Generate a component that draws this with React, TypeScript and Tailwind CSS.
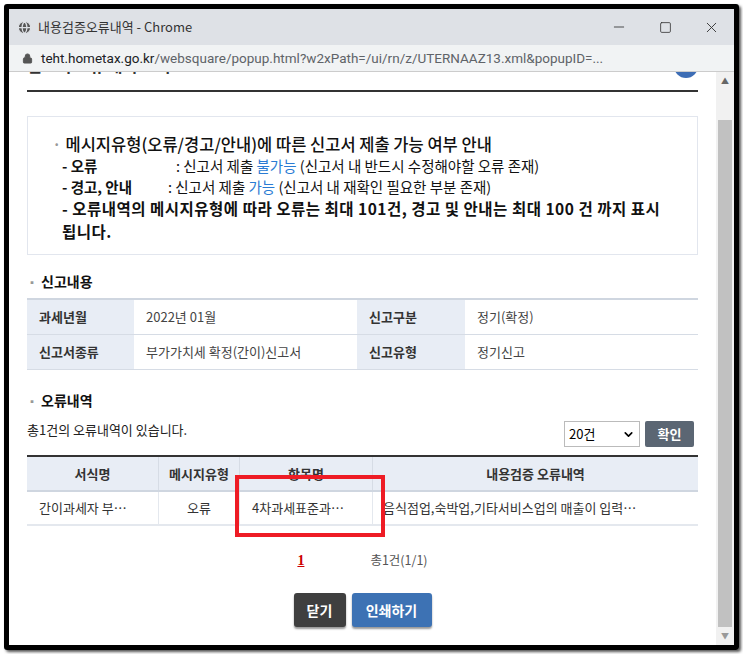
import { Minus, Square, X, Lock, Globe, ChevronDown } from 'lucide-react';

const font = { fontFamily: '"Noto Sans CJK KR", "Noto Sans", sans-serif' };

export default function App() {
  return (
    <div className="w-[743px] h-[654px] bg-white p-[4px]" style={font}>
      <div className="w-[735px] h-[646px] border-[5px] border-black rounded-[3px] flex flex-col overflow-hidden shadow-[2px_2px_3px_#555]">
        {/* title bar */}
        <div className="h-[36px] bg-[#dee1e6] flex items-center pl-[8px] shrink-0">
          <Globe className="w-[15px] h-[15px] text-[#555]" fill="#555" stroke="#dee1e6" />
          <span className="ml-[6px] text-[13px] text-[#333]">내용검증오류내역 - Chrome</span>
          <div className="ml-auto flex items-center">
            <div className="w-[46px] flex justify-center"><Minus className="w-[16px] h-[16px] text-[#333]" strokeWidth={1.3} /></div>
            <div className="w-[46px] flex justify-center"><Square className="w-[13px] h-[13px] text-[#333]" strokeWidth={1.5} /></div>
            <div className="w-[46px] flex justify-center"><X className="w-[17px] h-[17px] text-[#333]" strokeWidth={1.3} /></div>
          </div>
        </div>
        {/* address bar */}
        <div className="h-[27px] bg-[#f1f3f4] border-b border-[#ccc] flex items-center pl-[13px] shrink-0 relative z-10">
          <Lock className="w-[11px] h-[11px] text-[#555]" fill="#555" />
          <span className="ml-[8px] text-[13.5px] text-[#202124] whitespace-nowrap" style={{ fontFamily: 'Roboto, sans-serif' }}>
            teht.hometax.go.kr<span className="text-[#5f6368]">/websquare/popup.html?w2xPath=/ui/rn/z/UTERNAAZ13.xml&amp;popupID=...</span>
          </span>
        </div>
        {/* content */}
        <div className="flex-1 flex overflow-hidden">
          <div className="flex-1 relative overflow-hidden px-[18px]">
            <div className="h-[24px] relative border-b-2 border-[#333] mt-[-4px]">
              <span className="absolute left-0 top-[-13px] text-[16px] leading-[20px] text-[#333] font-bold">신고서 오류 내역 조회</span>
              <div className="absolute right-0 top-[-14px] w-[24px] h-[24px] rounded-full bg-[#3d6db5]" />
            </div>
            <div className="mt-[24px] border border-[#e2e6ee] h-[139px] pl-[24px] pt-[16px] pr-[34px] text-[#111]">
              <div className="text-[16.5px] leading-[22px] font-medium"><span className="text-[#999] mr-[4px]">·</span>메시지유형(오류/경고/안내)에 따른 신고서 제출 가능 여부 안내</div>
              <div className="pl-[10px] text-[14.5px] leading-[21px]">
                <div><span className="font-bold inline-block w-[114px]">- 오류</span><span>: 신고서 제출 <span className="text-[#2a7bd3]">불가능</span> (신고서 내 반드시 수정해야할 오류 존재)</span></div>
                <div><span className="font-bold inline-block w-[106px]">- 경고, 안내</span><span>: 신고서 제출 <span className="text-[#2a7bd3]">가능</span> (신고서 내 재확인 필요한 부분 존재)</span></div>
                <div className="font-bold text-[15.5px] leading-[23px] tracking-[0.5px]">- 오류내역의 메시지유형에 따라 오류는 최대 101건, 경고 및 안내는 최대 100 건 까지 표시됩니다.</div>
              </div>
            </div>
            <div className="mt-[16px] text-[14px] font-bold text-[#111]"><span className="text-[#999] text-[10px] mr-[4px]">▪</span>신고내용</div>
            <div className="mt-[6px] border-t-2 border-[#cfd6e0] text-[13px]">
              {[['과세년월', '2022년 01월', '신고구분', '정기(확정)'], ['신고서종류', '부가가치세 확정(간이)신고서', '신고유형', '정기신고']].map((r) => (
                <div key={r[0]} className="grid grid-cols-[107px_223px_108px_1fr] h-[35px] border-b border-[#d6dce5]">
                  <div className="bg-[#e8edf5] flex items-center pl-[12px] font-bold text-[#333]">{r[0]}</div>
                  <div className="flex items-center pl-[12px] text-[#444]">{r[1]}</div>
                  <div className="bg-[#e8edf5] flex items-center pl-[12px] font-bold text-[#333]">{r[2]}</div>
                  <div className="flex items-center pl-[12px] text-[#444]">{r[3]}</div>
                </div>
              ))}
            </div>
            <div className="mt-[20px] text-[14px] font-bold text-[#111]"><span className="text-[#999] text-[10px] mr-[4px]">▪</span>오류내역</div>
            <div className="mt-[10px] flex items-end justify-between h-[26px]">
              <span className="text-[13px] text-[#222] mb-[8px]">총1건의 오류내역이 있습니다.</span>
              <div className="flex gap-[5px] items-center mr-[4px]">
                <div className="w-[76px] h-[26px] border border-[#bbb] flex items-center justify-between px-[4px] text-[13px]">20건<ChevronDown className="w-[13px] h-[13px]" strokeWidth={3} /></div>
                <div className="w-[49px] h-[26px] bg-[#5b6673] text-white text-[13px] font-bold flex items-center justify-center rounded-[2px]">확인</div>
              </div>
            </div>
            <div className="mt-[8px] border-t-2 border-[#333] text-[13px] relative">
              <div className="grid grid-cols-[132px_81px_133px_1fr] h-[35px] bg-[#e8edf5] border-b-2 border-[#cfd6e0] font-bold text-[#333]">
                {['서식명', '메시지유형', '항목명', '내용검증 오류내역'].map((h) => (
                  <div key={h} className="flex items-center justify-center border-r border-[#d6dce5] last:border-r-0 whitespace-nowrap">{h}</div>
                ))}
              </div>
              <div className="grid grid-cols-[132px_81px_133px_1fr] h-[34px] border-b-2 border-[#e4e8ee] text-[#333]">
                <div className="flex items-center pl-[12px] border-r border-[#e4e8ee]">간이과세자 부…</div>
                <div className="flex items-center justify-center border-r border-[#e4e8ee]">오류</div>
                <div className="flex items-center pl-[12px] border-r border-[#e4e8ee]">4차과세표준과…</div>
                <div className="flex items-center pl-[10px] whitespace-nowrap">음식점업,숙박업,기타서비스업의 매출이 입력…</div>
              </div>
              <div className="absolute left-[208px] top-[18px] w-[150px] h-[62px] border-[4px] border-[#ee1c25]" />
            </div>
            <div className="mt-[24px] flex justify-center items-center gap-[66px] text-[12.5px]">
              <span className="text-[#c00] font-bold underline text-[14px]" style={{ fontFamily: '"Liberation Serif", serif' }}>1</span>
              <span className="text-[#555]">총1건(1/1)</span>
            </div>
            <div className="mt-[22px] flex justify-center gap-[6px] text-white text-[14px] font-bold">
              <div className="w-[52px] h-[34px] bg-[#3f3f3f] rounded-[3px] flex items-center justify-center shadow-[0_2px_2px_#999]">닫기</div>
              <div className="w-[80px] h-[34px] bg-[#3d72b4] rounded-[3px] flex items-center justify-center shadow-[0_2px_2px_#999]">인쇄하기</div>
            </div>
          </div>
          {/* scrollbar */}
          <div className="w-[18px] bg-[#f1f1f1] flex flex-col items-center shrink-0">
            <div className="h-[18px] text-[8px] text-[#666] flex items-center">▲</div>
            <div className="w-[14px] flex-1 bg-[#c1c1c1] mt-[30px]" />
            <div className="h-[18px] text-[8px] text-[#999] flex items-center">▼</div>
          </div>
        </div>
      </div>
    </div>
  );
}
